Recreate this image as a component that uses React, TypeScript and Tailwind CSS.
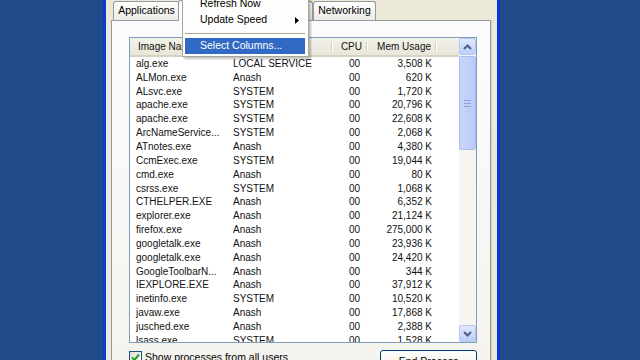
import React from "react";

const rows: [string, string, string][] = [
  ["alg.exe", "LOCAL SERVICE", "3,508 K"],
  ["ALMon.exe", "Anash", "620 K"],
  ["ALsvc.exe", "SYSTEM", "1,720 K"],
  ["apache.exe", "SYSTEM", "20,796 K"],
  ["apache.exe", "SYSTEM", "22,608 K"],
  ["ArcNameService...", "SYSTEM", "2,068 K"],
  ["ATnotes.exe", "Anash", "4,380 K"],
  ["CcmExec.exe", "SYSTEM", "19,044 K"],
  ["cmd.exe", "Anash", "80 K"],
  ["csrss.exe", "SYSTEM", "1,068 K"],
  ["CTHELPER.EXE", "Anash", "6,352 K"],
  ["explorer.exe", "Anash", "21,124 K"],
  ["firefox.exe", "Anash", "275,000 K"],
  ["googletalk.exe", "Anash", "23,936 K"],
  ["googletalk.exe", "Anash", "24,420 K"],
  ["GoogleToolbarN...", "Anash", "344 K"],
  ["IEXPLORE.EXE", "Anash", "37,912 K"],
  ["inetinfo.exe", "SYSTEM", "10,520 K"],
  ["javaw.exe", "Anash", "17,868 K"],
  ["jusched.exe", "Anash", "2,388 K"],
  ["lsass.exe", "SYSTEM", "1,528 K"],
];

const font = "font-['Tahoma','Liberation_Sans',sans-serif]";

function Tab({ label, width, selected = false }: { label: string; width: string; selected?: boolean }) {
  return (
    <div
      className={`${width} ${
        selected ? "h-[21px] -mb-px -mx-[2px] bg-[#fcfcfe] z-10" : "h-[19px] bg-gradient-to-b from-[#ffffff] to-[#ecebe6]"
      } border border-b-0 border-[#919b9c] rounded-t-[3px] flex items-center justify-center text-[10.5px] text-black`}
    >
      {label}
    </div>
  );
}

function HeaderCell({ label, width, align = "left" }: { label: string; width: string; align?: "left" | "right" }) {
  return (
    <div
      className={`${width} h-full relative flex items-center ${
        align === "right" ? "justify-end pr-[6px]" : "pl-[8px]"
      }`}
    >
      <span className="truncate">{label}</span>
      <div className="absolute right-0 top-[4px] bottom-[4px] w-[2px] border-l border-[#d0ccbb] border-r border-r-white" />
    </div>
  );
}

function Chevron({ up }: { up: boolean }) {
  return (
    <svg width="9" height="6" viewBox="0 0 9 6">
      <path
        d={up ? "M1 5 L4.5 1.5 L8 5" : "M1 1 L4.5 4.5 L8 1"}
        fill="none"
        stroke="#4d6185"
        strokeWidth="2"
      />
    </svg>
  );
}

export default function App() {
  return (
    <div className={`relative w-[640px] h-[360px] overflow-hidden flex bg-[#1f4b8b] ${font}`}>
      <div className="w-[103px] shrink-0" />
      <div className="w-[3px] shrink-0 bg-[#0a3ad2]" />

      {/* window body */}
      <div className="w-[391px] shrink-0 bg-[#ece9d8] pl-[5px] flex flex-col">
        {/* tabs */}
        <div className="h-[20px] flex items-end pl-[2px]">
          <Tab label="Applications" width="w-[67px]" />
          <Tab label="Processes" width="w-[64px]" selected />
          <Tab label="Performance" width="w-[73px]" />
          <Tab label="Networking" width="w-[63px]" />
        </div>

        {/* tab panel */}
        <div className="w-[380px] flex-1 border border-[#919b9c] bg-gradient-to-b from-[#fcfcfe] to-[#f4f3ee] pl-[17px] pt-[16px] shadow-[1px_0_0_#d5d2c4]">
          {/* list view */}
          <div className="w-[348px] h-[306px] border border-[#7f9db9] bg-white flex text-[10px] text-[#111]">
            <div className="w-[329px] flex flex-col overflow-hidden">
              <div className="h-[19px] shrink-0 flex bg-gradient-to-b from-[#f3f2ea] to-[#e8e6d8] border-b-2 border-[#d6d2c2]">
                <HeaderCell label="Image Name" width="w-[97px]" />
                <HeaderCell label="User Name" width="w-[106px]" />
                <HeaderCell label="CPU" width="w-[35px]" align="right" />
                <HeaderCell label="Mem Usage" width="w-[69px]" align="right" />
              </div>
              <div className="flex-1 overflow-hidden">
                {rows.map(([name, user, mem], i) => (
                  <div key={i} className="h-[13.85px] flex items-center leading-none">
                    <div className="w-[97px] pl-[6px] whitespace-nowrap">{name}</div>
                    <div className="w-[106px] pl-[6px] whitespace-nowrap">{user}</div>
                    <div className="w-[35px] pr-[8px] text-right">00</div>
                    <div className="w-[69px] pr-[5px] text-right whitespace-nowrap">{mem}</div>
                  </div>
                ))}
              </div>
            </div>

            {/* scrollbar */}
            <div className="w-[17px] flex flex-col bg-[#f6f5f0]">
              <div className="h-[17px] shrink-0 rounded-[2px] border border-[#b6c7f2] bg-gradient-to-b from-[#dfe8fe] to-[#bccefa] flex items-center justify-center">
                <Chevron up />
              </div>
              <div className="h-[94px] shrink-0 mt-px rounded-[2px] border border-[#a9bdf0] bg-gradient-to-r from-[#c8d6fc] to-[#bccbf6] flex flex-col items-center justify-center gap-[2px]">
                <div className="w-[7px] h-px bg-[#eef2fd] border-b border-[#8ca2e0]" />
                <div className="w-[7px] h-px bg-[#eef2fd] border-b border-[#8ca2e0]" />
                <div className="w-[7px] h-px bg-[#eef2fd] border-b border-[#8ca2e0]" />
              </div>
              <div className="flex-1" />
              <div className="h-[17px] shrink-0 rounded-[2px] border border-[#b6c7f2] bg-gradient-to-b from-[#dfe8fe] to-[#bccefa] flex items-center justify-center">
                <Chevron up={false} />
              </div>
            </div>
          </div>

          {/* bottom row */}
          <div className="w-[348px] mt-[8px] flex items-start justify-between text-[10.5px] text-black">
            <div className="flex items-start gap-[3px]">
              <div className="w-[13px] h-[13px] border border-[#1c5180] bg-gradient-to-br from-[#dcdcd7] to-white flex items-center justify-center">
                <svg width="9" height="9" viewBox="0 0 9 9">
                  <path d="M1 4.5 L3.5 7 L8 1.5" fill="none" stroke="#21a121" strokeWidth="2" />
                </svg>
              </div>
              <span className="leading-[13px]">Show processes from all users</span>
            </div>
            <div className="w-[97px] h-[23px] -mt-px rounded-[3px] border border-[#003c74] bg-gradient-to-b from-white to-[#ece9d8] flex items-center justify-center">
              End Process
            </div>
          </div>
        </div>
      </div>

      <div className="w-[3px] shrink-0 bg-[#0a3ad2]" />
      <div className="flex-1" />

      {/* context menu */}
      <div className="absolute z-30 left-[182px] top-[-7px] w-[127px] bg-[#fdfdfb] border border-[#aca899] py-[2px] text-[10.5px] text-black shadow-[2px_2px_2px_rgba(0,0,0,0.25)]">
        <div className="h-[16px] ml-[2px] mr-[3px] pl-[15px] flex items-center">Refresh Now</div>
        <div className="h-[16px] ml-[2px] mr-[3px] pl-[15px] pr-[6px] flex items-center justify-between">
          <span>Update Speed</span>
          <svg width="4" height="7" viewBox="0 0 4 7">
            <path d="M0 0 L4 3.5 L0 7 Z" fill="#000" />
          </svg>
        </div>
        <div className="h-[10px] ml-[2px] mr-[3px] flex items-center">
          <div className="w-full h-px bg-[#aca899]" />
        </div>
        <div className="h-[16px] ml-[2px] mr-[3px] pl-[15px] flex items-center bg-[#316ac5] text-white">
          Select Columns...
        </div>
      </div>
    </div>
  );
}
